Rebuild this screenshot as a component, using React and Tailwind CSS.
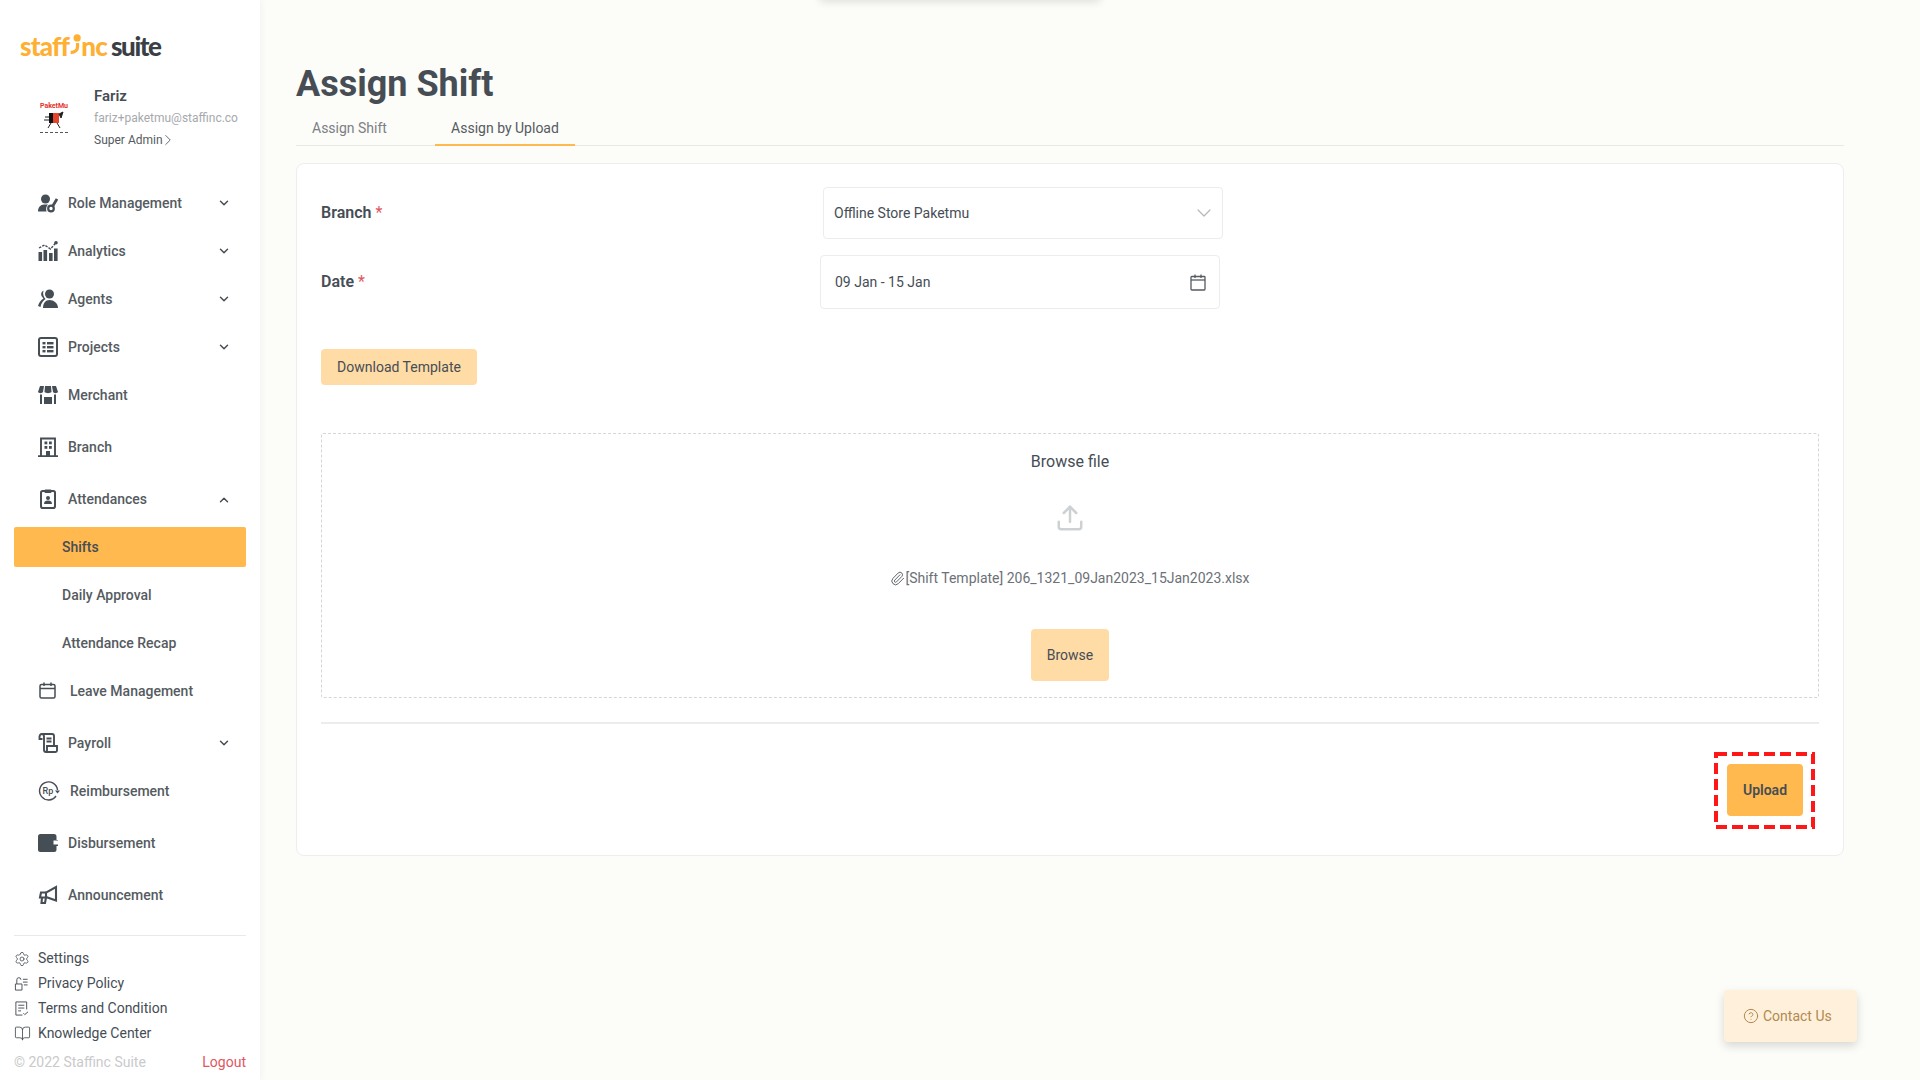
import { ChevronDown, ChevronUp, ChevronRight, Upload, Paperclip, CircleHelp, Settings, BookOpen } from 'lucide-react'

const iconClass = 'w-[20px] h-[20px] text-[#454d55]'

const RoleIcon = () => (
  <svg viewBox="0 0 20 20" className={iconClass} fill="currentColor">
    <circle cx="7.500" cy="6" r="4.500" />
    <path d="M0 18.500c0-4 2.500-7 6-7h4c-1.500 1.500-2.500 4-1.500 7z" />
    <circle cx="13" cy="15.500" r="2.800" fill="none" stroke="currentColor" strokeWidth="2.200" />
    <path d="M14.500 13.500l4.500-7.500" stroke="currentColor" strokeWidth="2.800" />
  </svg>
)

const AnalyticsIcon = () => (
  <svg viewBox="0 0 20 20" className={iconClass} fill="currentColor">
    <rect x="0.500" y="11" width="3.600" height="9" />
    <rect x="5.500" y="9" width="3.600" height="11" />
    <rect x="11" y="12" width="3.600" height="8" />
    <rect x="16" y="7.500" width="3.600" height="12.500" />
    <path d="M1 7l5.500-3 6 4 6-7" fill="none" stroke="currentColor" strokeWidth="1.400" strokeDasharray="2.500 1.200" />
    <circle cx="18" cy="1.800" r="1.800" />
  </svg>
)

const AgentsIcon = () => (
  <svg viewBox="0 0 20 20" className={iconClass} fill="currentColor">
    <circle cx="11.500" cy="5" r="4.500" />
    <path d="M5 19c0-5 2.500-8 6.500-8s8.500 3 8.500 8z" />
    <path d="M5.500 1.500c-2 1-3 3-2 5.500l2 2.500c-2.500 1.500-4.500 4-5.500 7.500l2.500 1c.5-3 2-6 5-8-2-2-3-5-2-8.500z" />
  </svg>
)

const ProjectsIcon = () => (
  <svg viewBox="0 0 20 20" className={iconClass} fill="currentColor">
    <rect x="1" y="1" width="18" height="18" rx="2" fill="none" stroke="currentColor" strokeWidth="2" />
    <rect x="4.500" y="5" width="3" height="2.400" />
    <rect x="9" y="5" width="6.500" height="2.400" />
    <rect x="4.500" y="9" width="3" height="2.400" />
    <rect x="9" y="9" width="6.500" height="2.400" />
    <rect x="4.500" y="13" width="3" height="2.400" />
    <rect x="9" y="13" width="6.500" height="2.400" />
  </svg>
)

const MerchantIcon = () => (
  <svg viewBox="0 0 20 20" className={iconClass} fill="currentColor">
    <path d="M2 1h4l-1 6c-1 1.500-4 1.500-5 0z" />
    <path d="M7 1h6l.5 6c-1.500 1.500-5.500 1.500-7 0z" />
    <path d="M14 1h4l2 6c-1 1.500-4 1.500-5 0z" />
    <rect x="2" y="9.500" width="2" height="9.500" />
    <rect x="6" y="12" width="8" height="7" />
    <rect x="16" y="9.500" width="2" height="9.500" />
  </svg>
)

const BranchIcon = () => (
  <svg viewBox="0 0 20 20" className={iconClass} fill="currentColor">
    <path d="M3 19V1.500h14V19M0 19.200h20" fill="none" stroke="currentColor" strokeWidth="1.900" />
    <rect x="6.500" y="4.500" width="2.800" height="2.800" />
    <rect x="11" y="4.500" width="2.800" height="2.800" />
    <rect x="6.500" y="9" width="2.800" height="2.800" />
    <rect x="11" y="9" width="2.800" height="2.800" />
    <rect x="8" y="14" width="4" height="5" />
  </svg>
)

const AttendanceIcon = () => (
  <svg viewBox="0 0 20 20" className={iconClass} fill="currentColor">
    <rect x="3" y="2" width="14" height="17" rx="1.800" fill="none" stroke="currentColor" strokeWidth="2" />
    <rect x="6.500" y="0.500" width="7" height="3.500" rx="1" />
    <circle cx="10" cy="9" r="2" />
    <path d="M6 15c0-2.500 1.500-3.500 4-3.500s4 1 4 3.500z" />
  </svg>
)

const PayrollIcon = () => (
  <svg viewBox="0 0 20 20" className={iconClass} fill="none" stroke="currentColor" strokeWidth="1.900">
    <path d="M4 1h10c1.500 0 2 1 2 2v9M4 1C2 1 1.500 2.500 1.500 4v2h3M4 1c1.500 0 2 1.500 2 3v13c0 1 1 2 2 2h9.500c1 0 1.500-.500 1.500-1.500V13H9v4c0 1-.500 2-1.500 2" />
    <path d="M8.500 5.500h5M8.500 8.500h5" />
  </svg>
)

const ReimburseIcon = () => (
  <svg viewBox="0 0 22 22" className="w-[22px] h-[22px] text-[#454d55]" fill="none" stroke="currentColor" strokeWidth="1.400">
    <path d="M19.500 10A9 9 0 1 0 18 16" />
    <path d="M17 10.500h5l-2.500 3z" fill="currentColor" stroke="none" />
    <text x="4.500" y="14" fontSize="9" fontFamily="Roboto" fontWeight="500" fill="currentColor" stroke="none">Rp</text>
  </svg>
)

const WalletIcon = () => (
  <svg viewBox="0 0 20 20" className={iconClass}>
    <path fill="currentColor" d="M2.500 1H16a2.500 2.500 0 0 1 2.500 2.500V7H20v6h-1.500v3.500A2.500 2.500 0 0 1 16 19H2.500A2.500 2.500 0 0 1 0 16.500v-13A2.500 2.500 0 0 1 2.500 1z" />
    <rect x="15.500" y="7.500" width="5" height="4" fill="#fff" />
  </svg>
)

const MegaphoneIcon = () => (
  <svg viewBox="0 0 20 20" className={iconClass} fill="none" stroke="currentColor" strokeWidth="2.100">
    <path d="M18 2v13.500L8 12V7.500z" />
    <path d="M8 7.500H3L2 12.500h6" />
    <path d="M4 12.500L3.500 18h3.500l1-5.500" />
  </svg>
)

const LeaveIcon = () => (
  <svg viewBox="0 0 17 17" className="w-[17px] h-[17px] text-[#454d55]" fill="none" stroke="currentColor" strokeWidth="1.500">
    <rect x="1" y="2.500" width="15" height="13.500" rx="1.500" />
    <path d="M1 6.500h15M5 0.500v3.500M12 0.500v3.500" />
  </svg>
)

const DateIcon = () => (
  <svg viewBox="0 0 16 17" className="w-[16px] h-[17px] text-[#555b61]" fill="none" stroke="currentColor" strokeWidth="1.300">
    <rect x="1" y="2.500" width="14" height="13.500" rx="0.800" />
    <path d="M1 6h14" />
    <path d="M5 0.500v3.500M11 0.500v3.500" />
  </svg>
)

const PrivacyIcon = () => (
  <svg viewBox="0 0 16 16" className="w-[15px] h-[15px] text-[#454d55]" fill="none" stroke="currentColor" strokeWidth="1">
    <path d="M1.500 15V8.500h7V15zM3 8.500V4a2.200 2.200 0 0 1 4.400 0M9.500 3.500h5M9.500 6.500h5M10.500 9.500h4" />
  </svg>
)

const TermsIcon = () => (
  <svg viewBox="0 0 16 16" className="w-[15px] h-[15px] text-[#454d55]" fill="none" stroke="currentColor" strokeWidth="1">
    <path d="M13.500 9V1H2v14h7M4.500 4.500h6.500M4.500 7.500h6.500M4.500 10.500h3M10 13l1.500 1.500L15 11.500" />
  </svg>
)

const menu = [
  { label: 'Role Management', icon: RoleIcon, chevron: true },
  { label: 'Analytics', icon: AnalyticsIcon, chevron: true },
  { label: 'Agents', icon: AgentsIcon, chevron: true },
  { label: 'Projects', icon: ProjectsIcon, chevron: true },
  { label: 'Merchant', icon: MerchantIcon },
  { label: 'Branch', icon: BranchIcon },
]

const menuBottom = [
  { label: 'Payroll', icon: PayrollIcon, chevron: true },
  { label: 'Reimbursement', icon: ReimburseIcon, wide: true },
  { label: 'Disbursement', icon: WalletIcon },
  { label: 'Announcement', icon: MegaphoneIcon },
]

const footerLinks = [
  { label: 'Settings', icon: <Settings className="w-[16px] h-[16px] text-[#454d55]" strokeWidth={1.2} /> },
  { label: 'Privacy Policy', icon: <PrivacyIcon /> },
  { label: 'Terms and Condition', icon: <TermsIcon /> },
  { label: 'Knowledge Center', icon: <BookOpen className="w-[17px] h-[17px] text-[#454d55]" strokeWidth={1.2} /> },
]

function MenuItem({ item }) {
  const Icon = item.icon
  return (
    <div className={`flex items-center h-10 pl-[38px] pr-[29px] ${item.chevron ? 'mb-2' : 'mb-3'}`}>
      <span className={`flex items-center shrink-0 ${item.wide ? 'w-[32px]' : 'w-[30px]'}`}>
        <Icon />
      </span>
      <span className="flex-1 text-[14px] font-medium text-[#555b61]">{item.label}</span>
      {item.chevron && <ChevronDown className="w-[14px] h-[14px] text-[#454d55]" strokeWidth={2.5} />}
    </div>
  )
}

function Sidebar() {
  return (
    <aside className="w-[260px] h-screen shrink-0 bg-white shadow-[0_0_8px_rgba(0,0,0,0.06)] flex flex-col z-10">
      {/* Logo */}
      <div className="flex items-end h-[61px] pl-[20px] text-[26px] leading-[30px] font-black tracking-[-0.8px] font-['Lato',sans-serif]">
        <span className="text-[#fdb032]">staff</span>
        <svg viewBox="0 0 14 30" className="w-[12px] h-[29px] text-[#fdb032]" fill="none" stroke="currentColor" strokeWidth="3.800">
          <circle cx="9.500" cy="5" r="4.200" fill="currentColor" stroke="none" />
          <path d="M10 11v4c0 4-3 7-8 7" />
        </svg>
        <span className="text-[#fdb032]">nc</span>
        <span className="text-[#3a3f45] ml-[4px] tracking-[-1.4px]">suite</span>
      </div>

      {/* Profile */}
      <div className="flex h-[122px] pt-[25px] pl-[36px]">
        <div className="w-[36px] h-[36px] mt-[16px] shrink-0 flex flex-col items-center">
          <span className="text-[7px] leading-[8px] font-bold text-[#e5332a]">PaketMu</span>
          <svg viewBox="0 0 24 18" className="w-[24px] h-[18px] mt-[1px]">
            <rect x="9" y="2" width="8" height="10" fill="#e5432a" />
            <rect x="7" y="2" width="4" height="10" fill="#111" />
            <path d="M17 3l4-2-2 6zM2 9h5M3 6h4M9 12l-3 5M15 12l3 5" stroke="#222" strokeWidth="1" fill="#222" />
          </svg>
          <div className="w-[28px] mt-[3px] border-t border-dashed border-[#555]" />
        </div>
        <div className="ml-[22px]">
          <div className="text-[15px] leading-[20px] font-semibold text-[#464d55]">Fariz</div>
          <div className="mt-[3px] text-[12px] leading-[18px] text-[#a6a9ac]">fariz+paketmu@staffinc.co</div>
          <div className="mt-[4px] flex items-center text-[12px] leading-[18px] text-[#555b61]">
            Super Admin
            <ChevronRight className="w-[18px] h-[18px] ml-[-4px]" strokeWidth={1.2} />
          </div>
        </div>
      </div>

      {/* Menu */}
      <nav className="flex-1">
        {menu.map((item) => (
          <MenuItem key={item.label} item={item} />
        ))}
        <div className="flex items-center h-10 pl-[38px] pr-[29px] mb-2">
          <span className="flex items-center w-[30px] shrink-0">
            <AttendanceIcon />
          </span>
          <span className="flex-1 text-[14px] font-medium text-[#555b61]">Attendances</span>
          <ChevronUp className="w-[14px] h-[14px] text-[#454d55] mt-[1px]" strokeWidth={2.5} />
        </div>
        <div className="flex items-center h-10 mx-[14px] mt-[1px] mb-2 pl-[48px] rounded-[2px] bg-[#ffb94f] text-[14px] font-medium text-[#464d55]">Shifts</div>
        <div className="flex items-center h-10 mx-[14px] mb-2 pl-[48px] text-[14px] font-medium text-[#555b61]">Daily Approval</div>
        <div className="flex items-center h-10 mx-[14px] mb-2 pl-[48px] text-[14px] font-medium text-[#555b61]">Attendance Recap</div>
        <div className="flex items-center h-10 pl-[39px] mb-3">
          <span className="w-[31px] shrink-0 mt-[-2px]">
            <LeaveIcon />
          </span>
          <span className="text-[14px] font-medium text-[#555b61]">Leave Management</span>
        </div>
        {menuBottom.map((item) => (
          <MenuItem key={item.label} item={item} />
        ))}
      </nav>

      {/* Footer */}
      <div className="mx-[14px] border-t border-[#e9e9e9] pt-[10px] pb-[5px]">
        {footerLinks.map((link) => (
          <div key={link.label} className="flex items-center h-[25px] text-[14px] text-[#464d55]">
            <span className="w-[24px] shrink-0 flex items-center">{link.icon}</span>
            {link.label}
          </div>
        ))}
        <div className="mt-[4px] flex justify-between items-center h-[25px] text-[14px]">
          <span className="text-[#c9cacb]">© 2022 Staffinc Suite</span>
          <span className="text-[#e2555f]">Logout</span>
        </div>
      </div>
    </aside>
  )
}

function Required() {
  return <span className="text-[#e2555f] ml-[4px] font-normal">*</span>
}

function UploadForm() {
  return (
    <div className="mt-[17px] mr-[76px] bg-white border border-[#eeeeee] rounded-[8px] px-[24px] pt-[23px] h-[693px]">
      <div className="flex">
        <div className="w-[502px] pt-[14px] text-[16px] leading-[24px] font-semibold text-[#464d55]">Branch<Required /></div>
        <div className="w-[400px] h-[52px] border border-[#ececec] rounded-[4px] flex items-center justify-between pl-[10px] pr-[6px] text-[14px] text-[#464d55]">
          Offline Store Paketmu
          <ChevronDown className="w-[24px] h-[24px] text-[#b4b7ba]" strokeWidth={1.2} />
        </div>
      </div>
      <div className="flex mt-[16px]">
        <div className="w-[499px] pt-[15px] text-[16px] leading-[24px] font-semibold text-[#464d55]">Date<Required /></div>
        <div className="w-[400px] h-[54px] border border-[#ececec] rounded-[4px] flex items-center justify-between pl-[14px] pr-[13px] text-[14px] text-[#464d55]">
          09 Jan - 15 Jan
          <DateIcon />
        </div>
      </div>

      <button className="mt-[40px] block w-[156px] h-[36px] rounded-[4px] bg-[#ffdba6] text-[14px] text-[#464d55]">Download Template</button>

      <div className="mt-[48px] h-[265px] border border-dashed border-[#d6d6d6] rounded-[2px] flex flex-col items-center">
        <div className="mt-[16px] text-[16px] leading-[24px] text-[#464d55]">Browse file</div>
        <Upload className="mt-[29px] w-[30px] h-[30px] text-[#ced1d4]" strokeWidth={2} />
        <div className="mt-[35px] flex items-center text-[14px] leading-[20px] text-[#6b7177]">
          <Paperclip className="w-[15px] h-[15px] text-[#5f656b]" strokeWidth={1.6} />
          [Shift Template] 206_1321_09Jan2023_15Jan2023.xlsx
        </div>
        <button className="mt-[41px] w-[78px] h-[52px] rounded-[4px] bg-[#ffdba6] text-[14px] text-[#464d55]">Browse</button>
      </div>

      <div className="mt-[24px] border-t-2 border-[#ececec] flex justify-end">
        <div className="relative mt-[40px] mr-[16px]">
          <button className="block w-[76px] h-[52px] rounded-[4px] bg-[#ffb94f] text-[14px] font-semibold text-[#464d55]">Upload</button>
          {/* red annotation frame, drawn over the button */}
          <svg className="absolute left-[-13px] top-[-12px] w-[101px] h-[77px]" viewBox="0 0 101 77" fill="none">
            <rect x="2" y="2" width="97" height="73" stroke="#ff1616" strokeWidth="4" strokeDasharray="11 5" />
          </svg>
        </div>
      </div>
    </div>
  )
}

export default function App() {
  return (
    <div className="flex h-screen overflow-hidden bg-[#fcfcf8] font-['Roboto',sans-serif]">
      <Sidebar />
      <main className="relative flex-1 pl-[36px]">
        {/* edge of a toast at the top */}
        <div className="absolute left-[560px] top-[-20px] w-[280px] h-[20px] shadow-[0_2px_8px_rgba(0,0,0,0.12)]" />
        <h1 className="pt-[60px] text-[36px] leading-[48px] font-bold text-[#464d55]">Assign Shift</h1>
        <div className="mt-[4px] mr-[76px] flex h-[34px] border-b border-[#e8e8e8] text-[14px]">
          <div className="w-[139px] pl-[16px] pt-[6px] text-[#7b8086]">Assign Shift</div>
          <div className="w-[140px] h-[34px] border-b-2 border-[#ffb94f] text-center pt-[6px] text-[#555b61]">Assign by Upload</div>
        </div>
        <UploadForm />
        <button className="absolute right-[63px] top-[990px] w-[133px] h-[52px] rounded-[4px] bg-[#fff0dc] shadow-[0_4px_10px_rgba(0,0,0,0.15)] flex items-center pl-[19px] text-[14px] text-[#b08a4e]">
          <CircleHelp className="w-[16px] h-[16px] mr-[4px]" strokeWidth={1.5} />
          Contact Us
        </button>
      </main>
    </div>
  )
}
